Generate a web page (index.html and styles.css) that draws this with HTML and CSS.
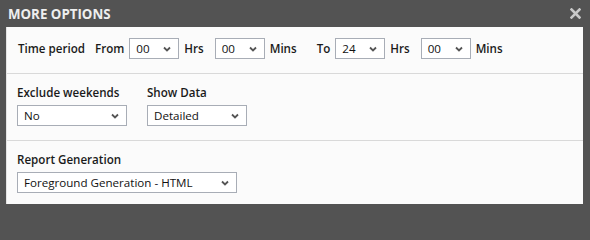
FILE: index.html
```html
<!DOCTYPE html>
<html>
<head>
<meta charset="utf-8">
<link rel="stylesheet" href="styles.css">
</head>
<body>
<div class="dialog">
  <div class="titlebar">
    <span class="title">MORE OPTIONS</span>
    <svg class="close" width="11" height="11" viewBox="0 0 11 11"><path d="M1.5 1.5 L9.5 9.5 M9.5 1.5 L1.5 9.5" stroke="#c8c8c8" stroke-width="2.6" stroke-linecap="square"/></svg>
  </div>
  <div class="panel">
    <div class="section row-time">
      <span class="lbl lbl-tp">Time period</span>
      <span class="lbl lbl-pre">From</span>
      <div class="sel sel-sm"><span>00</span><svg class="chev" width="8" height="6" viewBox="0 0 8 6"><path d="M1 1.5 L4 4.5 L7 1.5" fill="none" stroke="#555" stroke-width="1.8"/></svg></div>
      <span class="lbl lbl-unit">Hrs</span>
      <div class="sel sel-sm"><span>00</span><svg class="chev" width="8" height="6" viewBox="0 0 8 6"><path d="M1 1.5 L4 4.5 L7 1.5" fill="none" stroke="#555" stroke-width="1.8"/></svg></div>
      <span class="lbl lbl-unit lbl-end">Mins</span>
      <span class="lbl lbl-pre">To</span>
      <div class="sel sel-sm"><span>24</span><svg class="chev" width="8" height="6" viewBox="0 0 8 6"><path d="M1 1.5 L4 4.5 L7 1.5" fill="none" stroke="#555" stroke-width="1.8"/></svg></div>
      <span class="lbl lbl-unit">Hrs</span>
      <div class="sel sel-sm"><span>00</span><svg class="chev" width="8" height="6" viewBox="0 0 8 6"><path d="M1 1.5 L4 4.5 L7 1.5" fill="none" stroke="#555" stroke-width="1.8"/></svg></div>
      <span class="lbl lbl-unit">Mins</span>
    </div>
    <div class="section row-opts">
      <div class="field">
        <div class="flabel">Exclude weekends</div>
        <div class="sel sel-md"><span>No</span><svg class="chev" width="8" height="6" viewBox="0 0 8 6"><path d="M1 1.5 L4 4.5 L7 1.5" fill="none" stroke="#555" stroke-width="1.8"/></svg></div>
      </div>
      <div class="field">
        <div class="flabel">Show Data</div>
        <div class="sel sel-md2"><span>Detailed</span><svg class="chev" width="8" height="6" viewBox="0 0 8 6"><path d="M1 1.5 L4 4.5 L7 1.5" fill="none" stroke="#555" stroke-width="1.8"/></svg></div>
      </div>
    </div>
    <div class="section row-report">
      <div class="field">
        <div class="flabel">Report Generation</div>
        <div class="sel sel-lg"><span>Foreground Generation - HTML</span><svg class="chev" width="8" height="6" viewBox="0 0 8 6"><path d="M1 1.5 L4 4.5 L7 1.5" fill="none" stroke="#555" stroke-width="1.8"/></svg></div>
      </div>
    </div>
  </div>
</div>
</body>
</html>
```
FILE: styles.css
```css
html, body {
  margin: 0;
  padding: 0;
}
body {
  background: #535353;
  width: 590px;
  height: 213px;
  font-family: "Open Sans", "Liberation Sans", sans-serif;
  font-size: 11.6px;
  color: #1a1a1a;
}
.dialog {
  display: flex;
  flex-direction: column;
}
.titlebar {
  height: 27px;
  display: flex;
  align-items: center;
  justify-content: space-between;
  padding: 0 9px 0 8px;
}
.title {
  color: #eeeeee;
  font-weight: 700;
  font-size: 13.3px;
}
.close {
  display: block;
}
.panel {
  margin: 0 7px 0 6px;
  background: #fbfbfb;
  border-left: 1px solid #e4e4e4;
  height: 177px;
  display: flex;
  flex-direction: column;
}
.section {
  border-bottom: 1px solid #d9d9d9;
}
.section:last-child {
  border-bottom: none;
  flex: 1;
}
.row-time {
  height: 47px;
  box-sizing: border-box;
  padding: 11px 0 0 11px;
  display: flex;
  align-items: flex-start;
}
.lbl {
  font-weight: 600;
  line-height: 21px;
}
.lbl-tp {
  width: 77px;
}
.lbl-pre {
  margin-right: 5px;
}
.lbl-unit {
  margin-left: 5px;
  margin-right: 11px;
}
.lbl-end {
  margin-right: 20px;
}
.sel {
  box-sizing: border-box;
  height: 21px;
  border: 1px solid #a8adb6;
  background: #ffffff;
  display: flex;
  align-items: center;
  justify-content: space-between;
  padding: 0 7px 0 6px;
  color: #111;
}
.sel-sm { width: 50px; }
.sel-md { width: 110px; }
.sel-md2 { width: 100px; }
.sel-lg { width: 220px; }
.chev {
  display: block;
}
.row-opts {
  height: 67px;
  box-sizing: border-box;
  padding: 10px 0 0 10px;
  display: flex;
  gap: 20px;
}
.row-report {
  box-sizing: border-box;
  padding: 10px 0 0 10px;
}
.flabel {
  font-weight: 600;
  line-height: 18px;
  margin-bottom: 3px;
}
```
